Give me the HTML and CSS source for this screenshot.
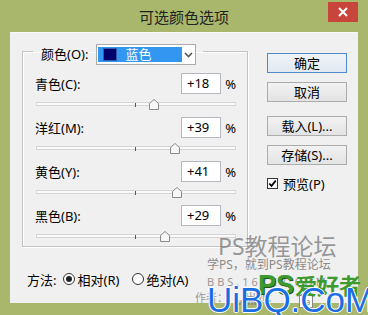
FILE: index.html
```html
<!DOCTYPE html>
<html>
<head>
<meta charset="utf-8">
<link rel="stylesheet" href="styles.css">
</head>
<body>
<div class="window">
  <div class="titlebar">
    <div class="title">可选颜色选项</div>
    <div class="close"><svg width="10" height="10" viewBox="0 0 10 10"><path d="M1 1l8 8M9 1l-8 8" stroke="#fff" stroke-width="2"/></svg></div>
  </div>
  <div class="panel">
    <div class="main">
      <fieldset class="group">
        <legend class="legend">
          <div class="legend-inner">
            <span class="lbl-color">颜色(O):</span>
            <div class="combo">
              <div class="combo-sel"><span class="swatch"></span><span class="combo-text">蓝色</span></div>
              <div class="combo-arrow"><svg width="9" height="6" viewBox="0 0 9 6"><path d="M1 1l3.5 3.5L8 1" fill="none" stroke="#555" stroke-width="1.6"/></svg></div>
            </div>
          </div>
        </legend>
        <div class="rows">
          <div class="row">
            <div class="row-top"><span class="lbl">青色(C):</span><span class="num">+18</span><span class="pct">%</span></div>
            <div class="slider"><div class="track"><span class="tick"></span><span class="thumb" style="left:59%"><svg width="10" height="11" viewBox="0 0 10 11"><path d="M0.5 10.5V4.5L5 0.5L9.5 4.5V10.5Z" fill="#f7f7f7" stroke="#8a8a8a"/></svg></span></div></div>
          </div>
          <div class="row">
            <div class="row-top"><span class="lbl">洋红(M):</span><span class="num">+39</span><span class="pct">%</span></div>
            <div class="slider"><div class="track"><span class="tick"></span><span class="thumb" style="left:69.5%"><svg width="10" height="11" viewBox="0 0 10 11"><path d="M0.5 10.5V4.5L5 0.5L9.5 4.5V10.5Z" fill="#f7f7f7" stroke="#8a8a8a"/></svg></span></div></div>
          </div>
          <div class="row">
            <div class="row-top"><span class="lbl">黄色(Y):</span><span class="num">+41</span><span class="pct">%</span></div>
            <div class="slider"><div class="track"><span class="tick"></span><span class="thumb" style="left:70.5%"><svg width="10" height="11" viewBox="0 0 10 11"><path d="M0.5 10.5V4.5L5 0.5L9.5 4.5V10.5Z" fill="#f7f7f7" stroke="#8a8a8a"/></svg></span></div></div>
          </div>
          <div class="row">
            <div class="row-top"><span class="lbl">黑色(B):</span><span class="num">+29</span><span class="pct">%</span></div>
            <div class="slider"><div class="track"><span class="tick"></span><span class="thumb" style="left:64.5%"><svg width="10" height="11" viewBox="0 0 10 11"><path d="M0.5 10.5V4.5L5 0.5L9.5 4.5V10.5Z" fill="#f7f7f7" stroke="#8a8a8a"/></svg></span></div></div>
          </div>
        </div>
      </fieldset>
      <div class="method">
        <span class="method-lbl">方法:</span>
        <span class="radio checked"></span><span class="radio-text">相对(R)</span>
        <span class="radio"></span><span class="radio-text">绝对(A)</span>
      </div>
    </div>
    <div class="side">
      <div class="btn default">确定</div>
      <div class="btn gap-s">取消</div>
      <div class="btn gap-l">载入(L)...</div>
      <div class="btn gap-s">存储(S)...</div>
      <div class="check">
        <svg width="11" height="11" viewBox="0 0 11 11"><rect x=".5" y=".5" width="10" height="10" fill="#fff" stroke="#333"/><path d="M2.2 5.5l2.3 2.4L8.8 2.6" fill="none" stroke="#000" stroke-width="1.7"/></svg>
        <span>预览(P)</span>
      </div>
    </div>
  </div>
  <div class="watermark">
    <div class="wm-title">PS教程论坛</div>
    <div class="wm-sub">学PS，就到PS教程论坛</div>
    <div class="wm-bbs">BBS.16XX8.COM</div>
    <div class="wm-author">作者：&nbsp;&nbsp;&nbsp;&nbsp;&nbsp;&nbsp;出处：</div>
    <div class="wm-small"><span class="wm-www">www</span><span class="wm-sa">sa</span></div>
    <div class="wm-logo"><span class="wm-ps">PS</span><span class="wm-ahz">爱好者</span></div>
    <div class="wm-uibq">UiBQ.CoM</div>
  </div>
</div>
</body>
</html>
```
FILE: styles.css
```css
* { box-sizing: border-box; }
html, body { margin: 0; padding: 0; }
body {
  width: 368px;
  height: 315px;
  overflow: hidden;
  background: #a8b76c;
  font-family: "Noto Sans", "Noto Sans CJK SC", sans-serif;
  font-size: 13px;
  color: #000;
}
.window { position: relative; width: 368px; height: 315px; }

.titlebar { height: 32px; display: flex; align-items: flex-start; }
.title {
  flex: 1;
  padding-left: 40px;
  padding-top: 7px;
  text-align: center;
  font-size: 15px;
  line-height: 20px;
  color: #222;
}
.close {
  width: 30px;
  height: 20px;
  margin-top: 2px;
  margin-right: 10px;
  background: #c7453b;
  display: flex;
  align-items: center;
  justify-content: center;
}

.panel {
  margin-left: 10px;
  width: 348px;
  height: 271px;
  background: #f0f0f0;
  border-top: 1px solid #f8f8f8;
  display: flex;
  padding: 5px 0 0 12px;
}
.main { width: 226px; display: flex; flex-direction: column; }

.group {
  margin: 0;
  width: 226px;
  min-width: 0;
  padding: 8px 11px 0 12px;
  border: 1px solid #c3c3c3;
  box-shadow: 1px 1px 0 #fff, inset 1px 1px 0 #fff;
}
.legend { padding: 6px 7px 0 8px; margin-left: -2px; }
.legend-inner { display: flex; align-items: center; gap: 8px; }
.lbl-color { line-height: 21px; }
.combo {
  width: 100px;
  height: 21px;
  border: 1px solid #acacac;
  background: #fff;
  display: flex;
  padding: 2px 1px;
}
.combo-sel {
  width: 84px;
  height: 15px;
  background: #3396f0;
  display: flex;
  align-items: center;
}
.swatch {
  width: 14px;
  height: 13px;
  margin-left: 5px;
  background: #00006a;
  border: 1px solid #2d5fb0;
}
.combo-text { margin-left: 8px; color: #fff; line-height: 15px; }
.combo-arrow { flex: 1; display: flex; align-items: center; justify-content: center; }

.rows { display: flex; flex-direction: column; gap: 3px; }
.row { display: flex; flex-direction: column; }
.row-top { display: flex; align-items: center; height: 21px; }
.lbl { flex: 1; }
.num {
  width: 40px;
  height: 21px;
  border: 1px solid #b5b8bf;
  background: #fff;
  padding-left: 5px;
  line-height: 19px;
}
.pct { width: 15px; text-align: right; }
.slider { height: 20px; padding-top: 8px; padding-left: 1px; }
.track {
  position: relative;
  width: 200px;
  height: 4px;
  border: 1px solid #d4d4d4;
  background: #fafafa;
}
.tick {
  position: absolute;
  left: 98px;
  top: 0;
  width: 1px;
  height: 4px;
  background: #555;
}
.thumb {
  position: absolute;
  top: -4px;
  width: 10px;
  height: 11px;
  margin-left: -5px;
  display: block;
}
.thumb svg { display: block; }

.method {
  margin-top: 22px;
  height: 20px;
  display: flex;
  align-items: center;
  padding-left: 5px;
}
.method-lbl { margin-right: 7px; }
.radio {
  width: 12px;
  height: 12px;
  border: 1px solid #333;
  border-radius: 50%;
  background: #fff;
  margin-right: 2px;
  position: relative;
}
.radio.checked::after {
  content: "";
  position: absolute;
  left: 2px;
  top: 2px;
  width: 6px;
  height: 6px;
  border-radius: 50%;
  background: #222;
}
.radio-text { margin-right: 13px; }

.side {
  margin-left: 19px;
  margin-top: 15px;
  width: 80px;
  display: flex;
  flex-direction: column;
}
.btn {
  height: 20px;
  border: 1px solid #acacac;
  background: linear-gradient(#f2f2f2, #e3e3e3);
  text-align: center;
  line-height: 18px;
}
.btn.default { border-color: #4f8bcc; background: linear-gradient(#eef3f8, #e2e9f1); }
.gap-s { margin-top: 9px; }
.gap-l { margin-top: 14px; }
.check { margin-top: 13px; display: flex; align-items: center; gap: 5px; height: 11px; }
.check svg { display: block; }

.watermark { position: absolute; left: 0; top: 0; width: 368px; height: 315px; pointer-events: none; }
.watermark > div { position: absolute; white-space: nowrap; }
.wm-title { left: 218px; top: 233px; font-size: 23px; line-height: 26px; color: rgba(120,120,120,0.75); }
.wm-sub { left: 207px; top: 258px; font-size: 12px; line-height: 14px; color: rgba(110,110,110,0.8); }
.wm-bbs { left: 207px; top: 275px; font-size: 11px; line-height: 13px; letter-spacing: 3px; color: rgba(120,120,120,0.75); }
.wm-author { left: 195px; top: 291px; font-size: 11px; line-height: 13px; color: rgba(120,120,120,0.75); }
.wm-small { left: 238px; top: 297px; font-size: 8px; line-height: 9px; color: #777; }
.wm-www { margin-right: 42px; }
.wm-sa { border: 1px solid #888; padding: 0 2px; background: #fff; }
.wm-logo { left: 258px; top: 271px; color: #3d9a2e; line-height: 28px; }
.wm-ps { font-family: "Liberation Sans", sans-serif; font-weight: bold; font-size: 27px; text-shadow: 1px 1px 0 #1f5a18; }
.wm-ahz { font-size: 22px; font-weight: bold; margin-left: 1px; }
.wm-uibq {
  left: 207px;
  top: 282px;
  font-family: "Liberation Sans", sans-serif;
  font-size: 35px;
  line-height: 35px;
  color: #1b6ee2;
  text-shadow: 1px 0 0 #fff, -1px 0 0 #fff, 0 1px 0 #fff, 0 -1px 0 #fff;
}
```
